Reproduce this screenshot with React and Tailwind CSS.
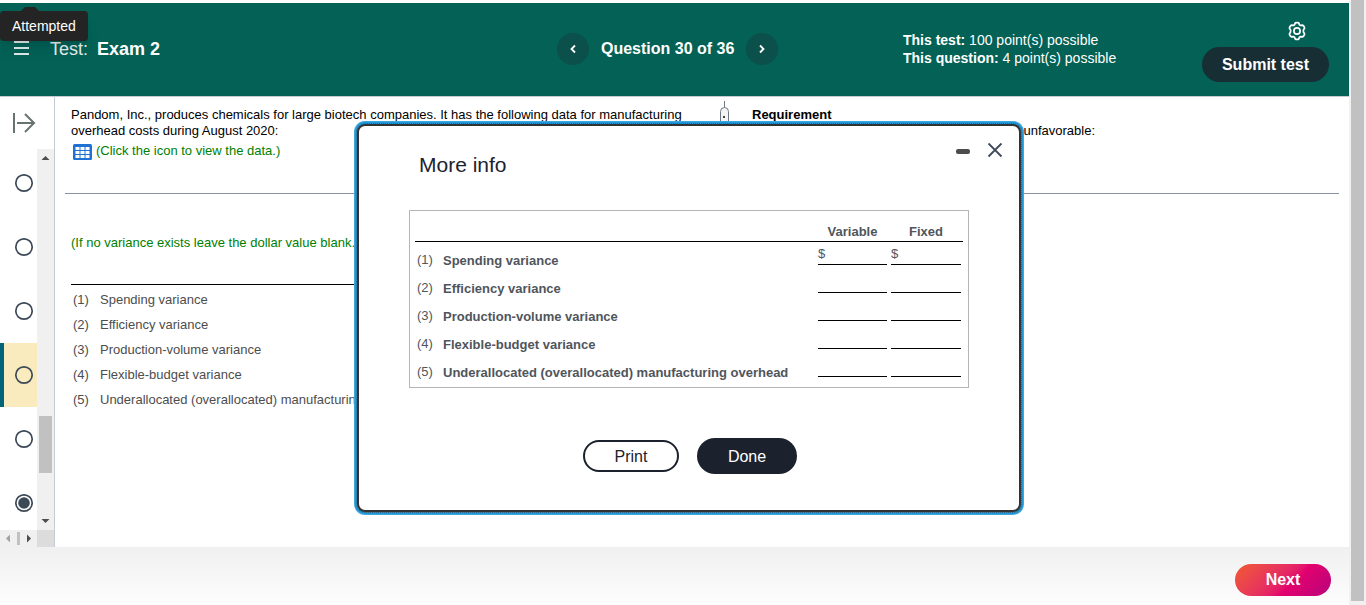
import React from "react";

const questions = [
  { id: 27, status: "open" },
  { id: 28, status: "open" },
  { id: 29, status: "open" },
  { id: 30, status: "open", current: true },
  { id: 31, status: "open" },
  { id: 32, status: "attempted" },
];

const variances = [
  "Spending variance",
  "Efficiency variance",
  "Production-volume variance",
  "Flexible-budget variance",
  "Underallocated (overallocated) manufacturing overhead",
];

function GearIcon() {
  return (
    <svg width="20" height="20" viewBox="0 0 20 20" fill="none" stroke="#fff" strokeWidth="1.7" strokeLinejoin="round">
      <path d="M8.3 1.9 Q10 1.2 11.7 1.9 L12.5 3.8 L13.6 4.4 L15.8 4.2 Q17.4 5.2 17.6 7.1 L16.4 9 V11 L17.6 12.9 Q17.4 14.8 15.8 15.8 L13.6 15.6 L12.5 16.2 L11.7 18.1 Q10 18.8 8.3 18.1 L7.5 16.2 L6.4 15.6 L4.2 15.8 Q2.6 14.8 2.4 12.9 L3.6 11 V9 L2.4 7.1 Q2.6 5.2 4.2 4.2 L6.4 4.4 L7.5 3.8 Z" />
      <circle cx="10" cy="10" r="3.1" />
    </svg>
  );
}

function Chevron({ left }) {
  return (
    <svg width="8" height="10" viewBox="0 0 8 10" fill="none" stroke="#fff" strokeWidth="1.8">
      <path d={left ? "M6 1.5 L2.5 5 L6 8.5" : "M2 1.5 L5.5 5 L2 8.5"} />
    </svg>
  );
}

function TopBar() {
  return (
    <header className="grid h-[94px] grid-cols-[557fr_346fr_299fr_147fr] items-center border-b border-[#c7cbd6] bg-[#036156] pb-0.5 text-white">
      <div className="flex items-center pl-3.5 text-lg">
        <button aria-label="Menu" className="mr-5">
          <svg width="16" height="16" viewBox="0 0 16 16" stroke="#dcebe9" strokeWidth="2">
            <path d="M0 1 H15 M0 7 H15 M0 13 H15" />
          </svg>
        </button>
        <span className="mr-[9px] text-[#e6efee]">Test:</span>
        <h1 className="font-bold">Exam 2</h1>
      </div>
      <nav className="flex items-center gap-3">
        <button aria-label="Previous question" className="flex size-8 items-center justify-center rounded-full bg-[#0b504b]">
          <Chevron left />
        </button>
        <span className="text-base font-bold">Question 30 of 36</span>
        <button aria-label="Next question" className="flex size-8 items-center justify-center rounded-full bg-[#0b504b]">
          <Chevron />
        </button>
      </nav>
      <div className="text-sm leading-[18px]">
        <p><b>This test:</b> 100 point(s) possible</p>
        <p><b>This question:</b> 4 point(s) possible</p>
      </div>
      <div className="flex flex-col items-end gap-1.5 self-start pt-[18px] pr-5">
        <button aria-label="Settings" className="mr-[22px]"><GearIcon /></button>
        <button className="h-[35px] w-[127px] rounded-full bg-[#182e35] text-base font-bold">Submit test</button>
      </div>
    </header>
  );
}

function StatusCircle({ filled }) {
  return (
    <svg width="20" height="20" viewBox="0 0 20 20" fill="none">
      <circle cx="10" cy="10" r="8.2" stroke="#3c4a57" strokeWidth="1.7" />
      {filled && <circle cx="10" cy="10" r="5.8" fill="#3c4a57" />}
    </svg>
  );
}

function Sidebar() {
  return (
    <aside className="flex w-[55px] shrink-0 flex-col border-r border-[#c5cad8]">
      <div className="h-[52px] pt-3.5 pl-3">
        <button aria-label="Expand question list">
          <svg width="24" height="24" viewBox="0 0 24 24" fill="none" stroke="#67736e" strokeWidth="2">
            <path d="M2 2 V22 M5 12 H22 M13 3 L22 12 L13 21" />
          </svg>
        </button>
      </div>
      <div className="flex h-[381px]">
        <ul className="flex-1 overflow-hidden pt-0.5">
          {questions.map((q) => (
            <li key={q.id}>
              <button
                aria-label={`Question ${q.id}`}
                className={
                  q.current
                    ? "flex h-16 w-full items-center border-l-4 border-[#04647a] bg-[#faebbe] pl-2.5"
                    : "flex h-16 w-full items-center pl-3.5"
                }
              >
                <StatusCircle filled={q.status === "attempted"} />
              </button>
            </li>
          ))}
        </ul>
        <div className="flex w-[17px] flex-col items-center bg-[#f0f0f0]">
          <svg width="17" height="17" viewBox="0 0 17 17" fill="#4d4d4d"><path d="M4.5 11 L8.5 7 L12.5 11 Z" /></svg>
          <div className="flex-[250]" />
          <div className="h-[57px] w-[13px] bg-[#c1c1c1]" />
          <div className="flex-[40]" />
          <svg width="17" height="17" viewBox="0 0 17 17" fill="#4d4d4d"><path d="M4.5 6 L8.5 10 L12.5 6 Z" /></svg>
        </div>
      </div>
      <div className="flex h-[17px] bg-[#f0f0f0]">
        <div className="flex flex-1 items-center justify-between">
          <svg width="17" height="17" viewBox="0 0 17 17" fill="#a3a3a3"><path d="M10 4.5 L6 8.5 L10 12.5 Z" /></svg>
          <div className="h-[13px] w-[3px] bg-[#c1c1c1]" />
          <svg width="17" height="17" viewBox="0 0 17 17" fill="#4d4d4d"><path d="M7 4.5 L11 8.5 L7 12.5 Z" /></svg>
        </div>
        <div className="w-[17px] bg-[#dcdcdc]" />
      </div>
    </aside>
  );
}

function DataIcon() {
  return (
    <svg width="19" height="16" viewBox="0 0 19 16">
      <rect width="19" height="16" rx="1.5" fill="#1f72d4" />
      <g fill="#fff">
        {[3, 7, 11].map((y) => [2, 7, 12].map((x) => <rect key={`${x}-${y}`} x={x + 0.5} y={y} width="4" height="3" />))}
      </g>
    </svg>
  );
}

function Question() {
  return (
    <main className="min-w-0 flex-1 text-[13px] leading-4 text-black">
      <div className="grid h-[96px] grid-cols-[661fr_16px_617fr]">
        <div className="pt-2.5 pr-4 pl-4">
          <p className="max-w-[640px]">
            Pandom, Inc., produces chemicals for large biotech companies. It has the following data for manufacturing
            overhead costs during August 2020:
          </p>
          <a href="#data" className="mt-[3px] flex items-center gap-1 pl-0.5 text-[#008000]">
            <span className="mt-0.5"><DataIcon /></span>
            <span>(Click the icon to view the data.)</span>
          </a>
        </div>
        <div className="flex flex-col items-center pt-1">
          <div className="h-1.5 w-px bg-[#6f7787]" />
          <div className="flex h-7 w-[9px] justify-center rounded-full border border-[#6f7787] bg-[#f4f4f4] pt-2">
            <div className="size-0.5 bg-[#444]" />
          </div>
          <div className="w-px flex-1 bg-[#6f7787]" />
        </div>
        <div className="pt-2.5 pl-5">
          <h2 className="font-bold">Requirement</h2>
          <p className="w-[343px] text-right">unfavorable:</p>
        </div>
      </div>
      <hr className="mr-2.5 ml-2.5 border-[#8c90a4]" />
      <p className="mt-[41px] pl-4 text-[#008000]">(If no variance exists leave the dollar value blank.</p>
      <ol className="mt-[33px] ml-4 w-1/2 border-t border-black pt-0.5 text-[#4d4d4d]">
        {variances.map((v, i) => (
          <li key={v} className="flex h-[25px] items-center pl-0.5">
            <span className="w-[27px] shrink-0">({i + 1})</span>
            <span>{v}</span>
          </li>
        ))}
      </ol>
    </main>
  );
}

function VarianceTable() {
  return (
    <div className="mx-[50px] mt-[33px] border border-[#b5b5b5] p-[5px] text-[13px] leading-4 text-[#50555c]">
      <table className="w-full border-separate border-spacing-0">
        <thead>
          <tr className="h-[26px]">
            <td className="w-7 border-b border-black" />
            <td className="border-b border-black" />
            <th scope="col" className="w-[73px] border-b border-black pt-1.5">Variable</th>
            <th scope="col" className="w-[74px] border-b border-black pt-1.5">Fixed</th>
          </tr>
        </thead>
        <tbody>
          {variances.map((v, i) => (
            <tr key={v} className="h-7 align-top">
              <td className="pt-2.5 pl-0.5">({i + 1})</td>
              <th scope="row" className="pt-[11px] text-left font-bold">{v}</th>
              <td className="px-0.5 pt-0.5"><div className="h-[21px] border-b border-black pt-0.5">{i === 0 && "$"}</div></td>
              <td className="px-0.5 pt-0.5"><div className="h-[21px] border-b border-black pt-0.5">{i === 0 && "$"}</div></td>
            </tr>
          ))}
        </tbody>
      </table>
    </div>
  );
}

function MoreInfoDialog() {
  return (
    <div className="pointer-events-none absolute inset-0 flex items-start justify-center pt-[122px] pl-3">
      <div role="dialog" aria-labelledby="more-info" className="pointer-events-auto w-[668px] max-w-full rounded-[10px] bg-[#1f97d8] p-0.5 ring-1 ring-[#3fa6de]">
        <div className="rounded-lg border-2 border-[#333] bg-white pb-9 outline-1 outline-dotted outline-[#3a6480]">
          <div className="flex items-start justify-between pt-3 pr-3 pl-[60px]">
            <h2 id="more-info" className="mt-[15px] text-[21px] leading-6 text-[#1c222d]">More info</h2>
            <div className="flex gap-2">
              <button aria-label="Minimize" className="flex size-6 items-center justify-center pt-0.5">
                <span className="h-[5px] w-3.5 rounded-[2px] bg-[#4d4d4d]" />
              </button>
              <button aria-label="Close" className="flex size-6 items-center justify-center">
                <svg width="16" height="16" viewBox="0 0 16 16" stroke="#3f4a58" strokeWidth="1.8">
                  <path d="M1.5 1.5 L14.5 14.5 M14.5 1.5 L1.5 14.5" />
                </svg>
              </button>
            </div>
          </div>
          <VarianceTable />
          <div className="mt-[50px] flex items-center justify-center gap-[18px] pl-0.5 text-base">
            <button className="h-8 w-24 rounded-full border-2 border-[#1c222d] pt-px text-[#1c222d]">Print</button>
            <button className="h-9 w-[100px] rounded-full bg-[#1c222d] pt-px text-white">Done</button>
          </div>
        </div>
      </div>
    </div>
  );
}

function StatusTooltip() {
  return (
    <div role="tooltip" className="absolute top-[7px] left-0">
      <svg width="18" height="4" viewBox="0 0 18 4" className="ml-[21px] block" fill="#242424"><path d="M0 4 L4 0 H14 L18 4 Z" /></svg>
      <div className="rounded bg-[#242424] px-3 py-[5px] text-sm leading-5 text-white shadow-lg">Attempted</div>
    </div>
  );
}

export default function App() {
  return (
    <div className="relative flex min-h-screen bg-white font-['Liberation_Sans',Arial,sans-serif]">
      <div className="flex min-w-0 flex-1 flex-col pt-[3px]">
        <TopBar />
        <div className="flex min-h-[450px]">
          <Sidebar />
          <Question />
        </div>
        <footer className="flex flex-1 items-start justify-end bg-linear-to-b from-[#f0f0f0] to-[#fdfdfd] pt-[17px] pr-[18px]">
          <button className="h-8 w-24 rounded-full bg-linear-135 from-[#f1592a] via-[#e2006e] via-60% to-[#b8007c] text-base font-bold text-white">Next</button>
        </footer>
      </div>
      <div className="w-[17px] shrink-0 bg-[#f1f1f1] px-0.5 pb-1">
        <div className="h-full bg-[#c1c1c1]" />
      </div>
      <MoreInfoDialog />
      <StatusTooltip />
    </div>
  );
}
